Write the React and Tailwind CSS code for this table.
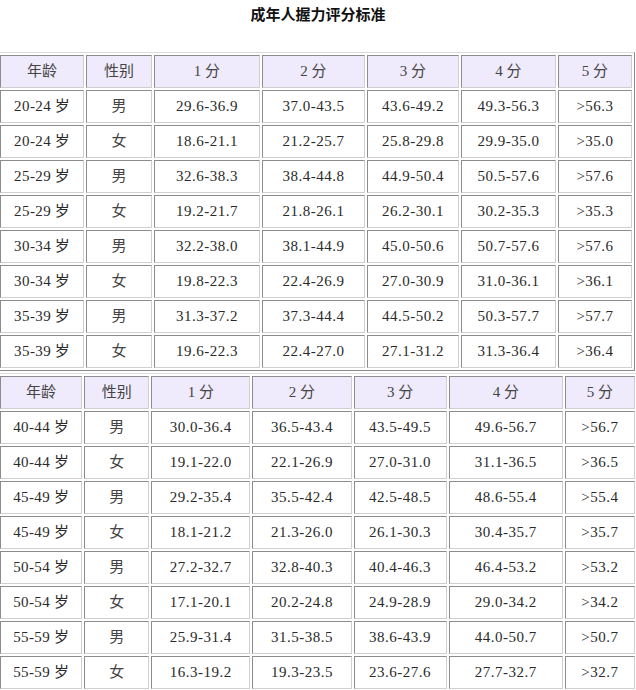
import React from 'react';

const HEAD = ['年龄', '性别', '1 分', '2 分', '3 分', '4 分', '5 分'];

const TOP_ROWS = [
  ['20-24', '男', '29.6-36.9', '37.0-43.5', '43.6-49.2', '49.3-56.3', '>56.3'],
  ['20-24', '女', '18.6-21.1', '21.2-25.7', '25.8-29.8', '29.9-35.0', '>35.0'],
  ['25-29', '男', '32.6-38.3', '38.4-44.8', '44.9-50.4', '50.5-57.6', '>57.6'],
  ['25-29', '女', '19.2-21.7', '21.8-26.1', '26.2-30.1', '30.2-35.3', '>35.3'],
  ['30-34', '男', '32.2-38.0', '38.1-44.9', '45.0-50.6', '50.7-57.6', '>57.6'],
  ['30-34', '女', '19.8-22.3', '22.4-26.9', '27.0-30.9', '31.0-36.1', '>36.1'],
  ['35-39', '男', '31.3-37.2', '37.3-44.4', '44.5-50.2', '50.3-57.7', '>57.7'],
  ['35-39', '女', '19.6-22.3', '22.4-27.0', '27.1-31.2', '31.3-36.4', '>36.4'],
];

const BOTTOM_ROWS = [
  ['40-44', '男', '30.0-36.4', '36.5-43.4', '43.5-49.5', '49.6-56.7', '>56.7'],
  ['40-44', '女', '19.1-22.0', '22.1-26.9', '27.0-31.0', '31.1-36.5', '>36.5'],
  ['45-49', '男', '29.2-35.4', '35.5-42.4', '42.5-48.5', '48.6-55.4', '>55.4'],
  ['45-49', '女', '18.1-21.2', '21.3-26.0', '26.1-30.3', '30.4-35.7', '>35.7'],
  ['50-54', '男', '27.2-32.7', '32.8-40.3', '40.4-46.3', '46.4-53.2', '>53.2'],
  ['50-54', '女', '17.1-20.1', '20.2-24.8', '24.9-28.9', '29.0-34.2', '>34.2'],
  ['55-59', '男', '25.9-31.4', '31.5-38.5', '38.6-43.9', '44.0-50.7', '>50.7'],
  ['55-59', '女', '16.3-19.2', '19.3-23.5', '23.6-27.6', '27.7-32.7', '>32.7'],
];

// cell widths include borders (border-box)
const TOP_W = ['w-[84px]', 'w-[66px]', 'w-[106px]', 'w-[103px]', 'w-[92px]', 'w-[95px]', 'w-[74px]'];
const BOTTOM_W = ['w-[82px]', 'w-[65px]', 'w-[99px]', 'w-[99px]', 'w-[93px]', 'w-[114px]', 'w-[70px]'];

const cell =
  'h-[33px] p-0 text-center align-middle font-normal border border-t-[#8c8c8c] border-l-[#8c8c8c] border-b-[#cfcfcf] border-r-[#cfcfcf]';

const ScoreTable = ({ rows, widths, extra }) => (
  <table
    className={`table-fixed border-separate border-spacing-[2px] border border-t-[#dcdcdc] border-l-[#dcdcdc] border-b-[#8a8a8a] border-r-[#8a8a8a] ml-[-3px] ${extra}`}
  >
    <thead>
      <tr>
        {HEAD.map((h, i) => (
          <th key={h} className={`${cell} ${widths[i]} bg-[#efebfc] text-[#444]`}>
            {h}
          </th>
        ))}
      </tr>
    </thead>
    <tbody>
      {rows.map((r, ri) => (
        <tr key={ri}>
          <td className={cell}>
            <span className="tracking-[0.4px]">{r[0]}</span> 岁
          </td>
          <td className={`${cell} text-[#444]`}>{r[1]}</td>
          {r.slice(2).map((v, ci) => (
            <td key={ci} className={`${cell} bg-white tracking-[0.5px]`}>
              {v}
            </td>
          ))}
        </tr>
      ))}
    </tbody>
  </table>
);

export default function App() {
  return (
    <div
      className="w-[636px] h-[690px] overflow-hidden bg-white text-[#2a2a2a] text-[15px] leading-none"
      style={{ fontFamily: '"Liberation Serif", "Noto Sans CJK SC", serif' }}
    >
      {/* title */}
      <div className="h-[52px] pt-[8px] text-center text-[15px] font-bold text-[#111]">
        成年人握力评分标准
      </div>

      <ScoreTable rows={TOP_ROWS} widths={TOP_W} extra="w-[638px]" />
      <ScoreTable rows={BOTTOM_ROWS} widths={BOTTOM_W} extra="w-[641px] mt-[2px]" />
    </div>
  );
}
